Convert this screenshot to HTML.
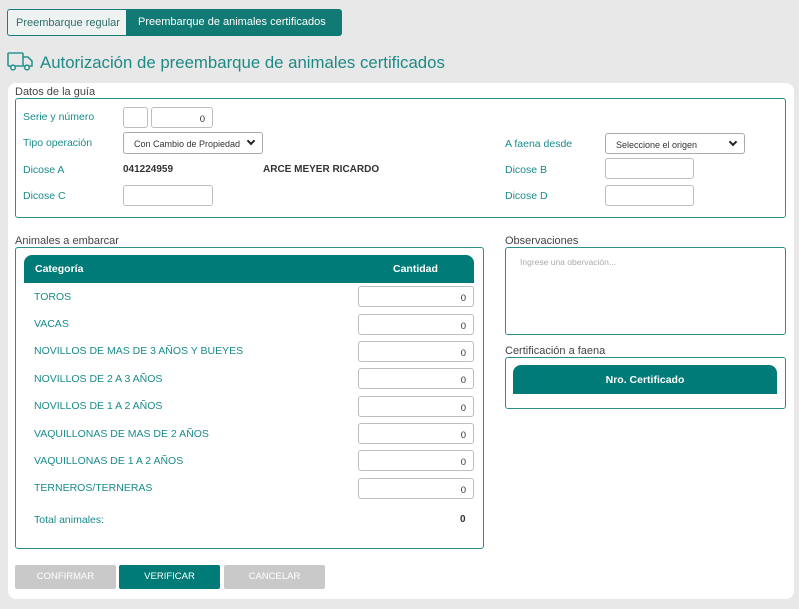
<!DOCTYPE html>
<html><head><meta charset="utf-8"><style>
*{box-sizing:border-box;margin:0;padding:0}
body{width:799px;height:609px;background:#e8e8e8;font-family:"Liberation Sans",sans-serif;position:relative;overflow:hidden;font-size:10px}
.a{position:absolute;white-space:nowrap}
.lbl{position:absolute;color:#1a8a8a;font-size:10.5px;white-space:nowrap}
.gl{position:absolute;color:#444;font-size:11px;white-space:nowrap}
.in{position:absolute;background:#fff;border:1px solid #bdbdbd;border-radius:3px;height:21px;font-size:9.5px;text-align:right;padding:6px 7px 0 0;color:#333}
.sel{position:absolute;background:#fff;border:1px solid #aaa;border-radius:3px;font-size:9px;color:#333;padding:6px 0 0 10px;white-space:nowrap;overflow:hidden}
.sel:after{content:"";position:absolute;right:8px;top:5px;width:4px;height:4px;border-right:2px solid #222;border-bottom:2px solid #222;transform:rotate(45deg)}
.box{position:absolute;border:1px solid #2a8f8c;border-radius:3px}
.btn{position:absolute;top:565px;height:24px;width:101px;color:#fff;font-size:9.5px;text-align:center;line-height:24px;border-radius:2px}
</style></head><body>
<div class="a" style="left:7px;top:9px;width:120px;height:27px;background:#eef3f2;border:1px solid #1a7f7b;border-right:none;border-radius:3px 0 0 3px;color:#2e6e6b;font-size:11px;padding:7px 0 0 8px">Preembarque regular</div>
<div class="a" style="left:126px;top:9px;width:216px;height:27px;background:#127a75;border-radius:0 3px 3px 0;color:#fff;font-size:11px;padding:7px 0 0 12px">Preembarque de animales certificados</div>
<svg class="a" style="left:7px;top:52px" width="27" height="19" viewBox="0 0 27 19" fill="none" stroke="#2a9590" stroke-width="1.6"><rect x="1" y="1" width="15" height="13" rx="1"/><path d="M16 5h5l4 4v5h-9"/><circle cx="6" cy="15.5" r="2.3" fill="#fff"/><circle cx="20" cy="15.5" r="2.3" fill="#fff"/></svg>
<div class="a" style="left:40px;top:53px;color:#1e8a86;font-size:16.8px">Autorización de preembarque de animales certificados</div>
<div class="a" style="left:8px;top:83px;width:786px;height:516px;background:#fff;border-radius:8px"></div>
<div class="gl" style="left:15px;top:86px">Datos de la guía</div>
<div class="box" style="left:15px;top:98px;width:771px;height:120px"></div>
<div class="lbl" style="left:23px;top:111px">Serie y número</div>
<div class="in" style="left:123px;top:107px;width:25px"></div>
<div class="in" style="left:151px;top:107px;width:62px">0</div>
<div class="lbl" style="left:23px;top:137px">Tipo operación</div>
<div class="sel" style="left:123px;top:132px;width:140px;height:22px">Con Cambio de Propiedad</div>
<div class="lbl" style="left:23px;top:164px">Dicose A</div>
<div class="a" style="left:123px;top:164px;color:#333;font-size:10px;font-weight:bold">041224959</div>
<div class="a" style="left:263px;top:164px;color:#333;font-size:10px;font-weight:bold">ARCE MEYER RICARDO</div>
<div class="lbl" style="left:23px;top:190px">Dicose C</div>
<div class="in" style="left:123px;top:185px;width:90px"></div>
<div class="lbl" style="left:505px;top:138px">A faena desde</div>
<div class="sel" style="left:605px;top:133px;width:140px;height:21px">Seleccione el origen</div>
<div class="lbl" style="left:505px;top:164px">Dicose B</div>
<div class="in" style="left:605px;top:158px;width:89px"></div>
<div class="lbl" style="left:505px;top:190px">Dicose D</div>
<div class="in" style="left:605px;top:185px;width:89px"></div>
<div class="gl" style="left:15px;top:235px">Animales a embarcar</div>
<div class="box" style="left:15px;top:247px;width:469px;height:302px"></div>
<div class="a" style="left:24px;top:255px;width:450px;height:28px;background:#007b78;border-radius:8px 8px 0 0;color:#fff;font-weight:bold;font-size:10.5px"><span class="a" style="left:11px;top:8px">Categoría</span><span class="a" style="left:369px;top:8px">Cantidad</span></div>
<div class="lbl" style="left:34px;top:291px">TOROS</div><div class="in" style="left:358px;top:286px;width:116px">0</div>
<div class="lbl" style="left:34px;top:318px">VACAS</div><div class="in" style="left:358px;top:314px;width:116px">0</div>
<div class="lbl" style="left:34px;top:345px">NOVILLOS DE MAS DE 3 AÑOS Y BUEYES</div><div class="in" style="left:358px;top:341px;width:116px">0</div>
<div class="lbl" style="left:34px;top:373px">NOVILLOS DE 2 A 3 AÑOS</div><div class="in" style="left:358px;top:368px;width:116px">0</div>
<div class="lbl" style="left:34px;top:400px">NOVILLOS DE 1 A 2 AÑOS</div><div class="in" style="left:358px;top:396px;width:116px">0</div>
<div class="lbl" style="left:34px;top:428px">VAQUILLONAS DE MAS DE 2 AÑOS</div><div class="in" style="left:358px;top:423px;width:116px">0</div>
<div class="lbl" style="left:34px;top:455px">VAQUILLONAS DE 1 A 2 AÑOS</div><div class="in" style="left:358px;top:450px;width:116px">0</div>
<div class="lbl" style="left:34px;top:482px">TERNEROS/TERNERAS</div><div class="in" style="left:358px;top:478px;width:116px">0</div>
<div class="lbl" style="left:34px;top:514px">Total animales:</div>
<div class="a" style="left:460px;top:514px;color:#333;font-size:10px;font-weight:bold">0</div>
<div class="gl" style="left:505px;top:235px">Observaciones</div>
<div class="box" style="left:505px;top:247px;width:281px;height:88px;color:#aaa;font-size:8.5px;padding:9px 0 0 14px">Ingrese una obervación...</div>
<div class="gl" style="left:505px;top:345px">Certificación a faena</div>
<div class="box" style="left:505px;top:357px;width:281px;height:52px"></div>
<div class="a" style="left:513px;top:365px;width:264px;height:29px;background:#007b78;border-radius:8px 8px 0 0;color:#fff;font-weight:bold;font-size:10.5px;text-align:center;line-height:30px">Nro. Certificado</div>
<div class="btn" style="left:15px;background:#c9c9c9">CONFIRMAR</div>
<div class="btn" style="left:119px;background:#007b78">VERIFICAR</div>
<div class="btn" style="left:224px;background:#c9c9c9">CANCELAR</div>
</body></html>
